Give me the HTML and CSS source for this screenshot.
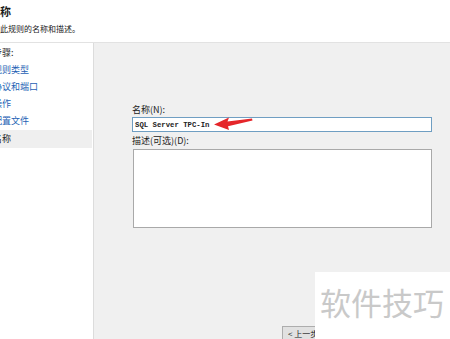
FILE: index.html
```html
<!DOCTYPE html>
<html lang="zh-CN">
<head>
<meta charset="UTF-8">
<title>新建入站规则向导 - 名称</title>
<link rel="stylesheet" href="styles.css">
</head>
<body>
    <div class="wizard">
        <header class="head">
            <h1 class="title">名称</h1>
            <p class="subtitle">指定此规则的名称和描述。</p>
        </header>

        <div class="main">
            <ul class="steps">
                <li class="steps-head">步骤:</li>
                <li class="step">规则类型</li>
                <li class="step">协议和端口</li>
                <li class="step">操作</li>
                <li class="step">配置文件</li>
                <li class="step current">名称</li>
            </ul>

            <div class="pane">
                <label class="field-label" for="rule_name">名称(N):</label>
                <div class="name-wrap">
                    <input type="text" id="rule_name" class="name-input" value="SQL Server TPC-In">
                    <svg class="arrow" width="40" height="14" viewBox="0 0 40 14">
                        <path d="M0 7.5 L15 0.5 L13.5 4.6 L38 1.4 L38.5 3.4 L14 9.2 L15 13 Z" fill="#e5262a"/>
                    </svg>
                </div>

                <label class="field-label desc-label" for="rule_desc">描述(可选)(D):</label>
                <textarea id="rule_desc" class="desc-input"></textarea>

                <div class="nav">
                    <button class="nav-btn">&lt; 上一步(B)</button>
                </div>
            </div>
        </div>

        <div class="watermark">软件技巧</div>
    </div>
</body>
</html>
```

FILE: styles.css
```css
html, body {
    margin: 0;
    padding: 0;
}

body {
    width: 450px;
    height: 339px;
    overflow: hidden;
    background-color: #f0f0f0;
    font-family: "Noto Sans CJK SC", "Noto Sans", sans-serif;
    color: #1a1a1a;
}

.wizard {
    position: relative;
    width: 450px;
    height: 339px;
    overflow: hidden;
}

.head {
    height: 42px;
    background: #fff;
    border-bottom: 1px solid #e2e2e2;
    overflow: hidden;
}

.title {
    margin: 5px 0 0 -11px;
    font-size: 11px;
    line-height: 13px;
    font-weight: bold;
    white-space: nowrap;
}

.subtitle {
    margin: 6px 0 0 -16px;
    font-size: 8px;
    line-height: 10px;
    white-space: nowrap;
}

.main {
    display: flex;
    height: 296px;
}

.steps {
    width: 93px;
    margin: 0;
    padding: 1px 0 0 0;
    list-style: none;
    background: #fff;
    border-right: 1px solid #dcdcdc;
    overflow: hidden;
}

.steps li {
    height: 17px;
    line-height: 17px;
    font-size: 9px;
    white-space: nowrap;
    text-indent: -7px;
}

.step {
    color: #1e5fb4;
}

.steps-head {
    color: #222;
}

.step.current {
    margin-top: 1px;
    height: 18px;
    line-height: 18px;
    margin-right: 1px;
    background: #efefef;
    color: #222;
}

.pane {
    flex: 1;
    background: #f0f0f0;
    padding: 61px 0 0 38px;
}

.field-label {
    display: block;
    font-size: 9px;
    line-height: 12px;
    white-space: nowrap;
}

.name-wrap {
    position: relative;
    margin-top: 1px;
    width: 300px;
}

.name-input {
    display: block;
    box-sizing: border-box;
    width: 300px;
    height: 15px;
    margin: 0;
    padding: 0 2px;
    border: 1px solid #6f9ec2;
    background: #fff;
    font-family: "Liberation Mono", monospace;
    font-size: 7.3px;
    font-weight: bold;
    color: #222;
    outline: none;
}

.arrow {
    position: absolute;
    left: 82px;
    top: 0;
}

.desc-label {
    margin-top: 3px;
}

.desc-input {
    display: block;
    box-sizing: border-box;
    width: 299px;
    height: 79px;
    margin: 2px 0 0 1px;
    border: 1px solid #a9a9a9;
    background: #fff;
    resize: none;
}

.nav {
    margin-top: 90px;
    padding-left: 150px;
}

.nav-btn {
    height: 16px;
    padding: 0 5px;
    border: 1px solid #adadad;
    background: #e1e1e1;
    font-family: "Noto Sans CJK SC", sans-serif;
    font-size: 8px;
    line-height: 14px;
    color: #222;
}

.watermark {
    position: absolute;
    left: 315px;
    top: 272px;
    width: 135px;
    height: 67px;
    background: #fff;
    padding: 12px 0 0 5px;
    box-sizing: border-box;
    font-family: "Noto Sans CJK SC", sans-serif;
    font-size: 31px;
    line-height: 36px;
    color: #c9c9c9;
    white-space: nowrap;
}
```
